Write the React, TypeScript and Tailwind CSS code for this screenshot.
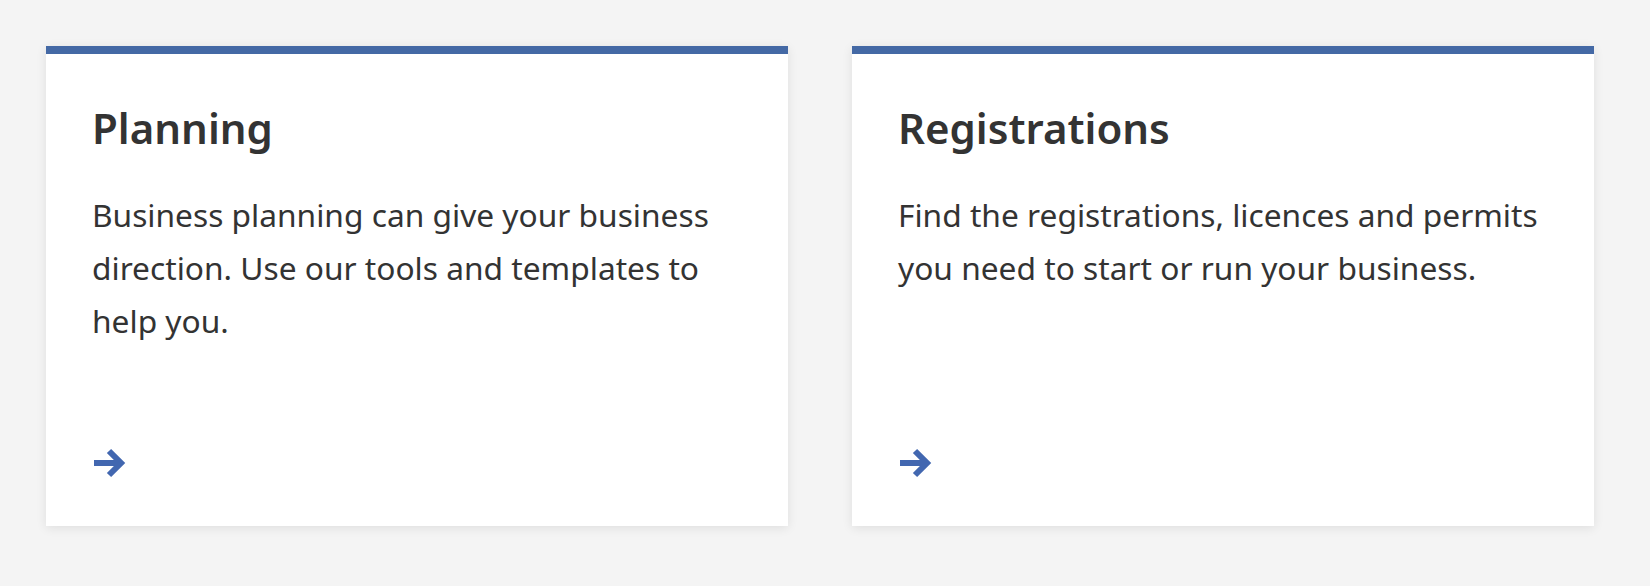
import React from "react";

type Tile = { title: string; body: string };

const tiles: Tile[] = [
  {
    title: "Planning",
    body: "Business planning can give your business direction. Use our tools and templates to help you.",
  },
  {
    title: "Registrations",
    body: "Find the registrations, licences and permits you need to start or run your business.",
  },
];

function Arrow() {
  return (
    <svg width="32" height="30" viewBox="0 0 32 30" className="ml-[2px] overflow-visible" aria-hidden="true">
      <path d="M0 15H27M15 3L27 15L15 27" fill="none" stroke="#4267b0" strokeWidth="6" strokeLinejoin="miter" />
    </svg>
  );
}

function Card({ title, body }: Tile) {
  return (
    <a
      href="#"
      className="flex flex-col w-[742px] h-[480px] bg-white border-t-8 border-[#4469a5] shadow-[0_2px_10px_rgba(0,0,0,0.09)] px-[46px] pt-[49px] pb-[48px] text-[#333333]"
    >
      <h2 className="text-[42px] leading-[1.2] font-semibold">{title}</h2>
      <p className="mt-[35px] text-[31.7px] leading-[53px]">{body}</p>
      <div className="mt-auto">
        <Arrow />
      </div>
    </a>
  );
}

export default function App() {
  return (
    <div className="min-h-[586px] bg-[#f4f4f4] pt-[46px] pl-[46px] font-['Noto_Sans',sans-serif]">
      <div className="flex gap-[64px]">
        {tiles.map((t) => (
          <Card key={t.title} {...t} />
        ))}
      </div>
    </div>
  );
}
